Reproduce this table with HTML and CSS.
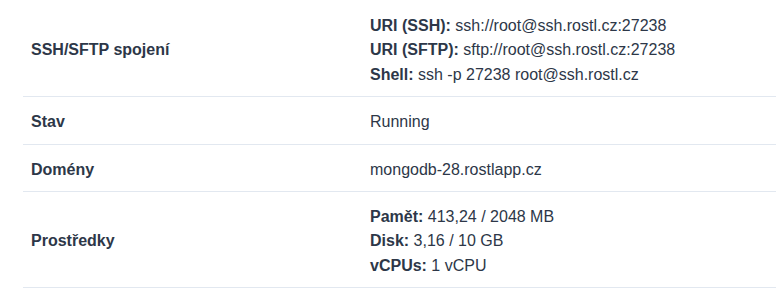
FILE: index.html
```html
<!DOCTYPE html>
<html lang="cs">
<head>
<meta charset="utf-8">
<link rel="stylesheet" href="styles.css">
</head>
<body>
<div class="wrap">
<table class="info">
<tbody>
<tr>
<th>SSH/SFTP spojení</th>
<td>
<div><strong>URI (SSH):</strong> ssh://root@ssh.rostl.cz:27238</div>
<div><strong>URI (SFTP):</strong> sftp://root@ssh.rostl.cz:27238</div>
<div><strong>Shell:</strong> ssh -p 27238 root@ssh.rostl.cz</div>
</td>
</tr>
<tr>
<th>Stav</th>
<td>Running</td>
</tr>
<tr>
<th>Domény</th>
<td>mongodb-28.rostlapp.cz</td>
</tr>
<tr>
<th>Prostředky</th>
<td>
<div><strong>Pamět:</strong> 413,24 / 2048 MB</div>
<div><strong>Disk:</strong> 3,16 / 10 GB</div>
<div><strong>vCPUs:</strong> 1 vCPU</div>
</td>
</tr>
</tbody>
</table>
</div>
</body>
</html>
```

FILE: styles.css
```css
html, body {
  margin: 0;
  padding: 0;
  background: #ffffff;
  overflow: hidden;
}
.wrap {
  padding-left: 23px;
  padding-top: 1px;
}
.info {
  width: 780px;
  border-collapse: collapse;
  font-family: "Liberation Sans", Arial, sans-serif;
  font-size: 16px;
  line-height: 24.25px;
  color: #2d3748;
}
.info tr {
  border-bottom: 1px solid #e2e8f0;
}
.info th {
  width: 323px;
  text-align: left;
  font-weight: bold;
  padding: 13.125px 8px 9.125px;
  vertical-align: middle;
}
.info td {
  padding: 13.125px 8px 9.125px;
  vertical-align: middle;
}
.info strong {
  font-weight: bold;
}
```
